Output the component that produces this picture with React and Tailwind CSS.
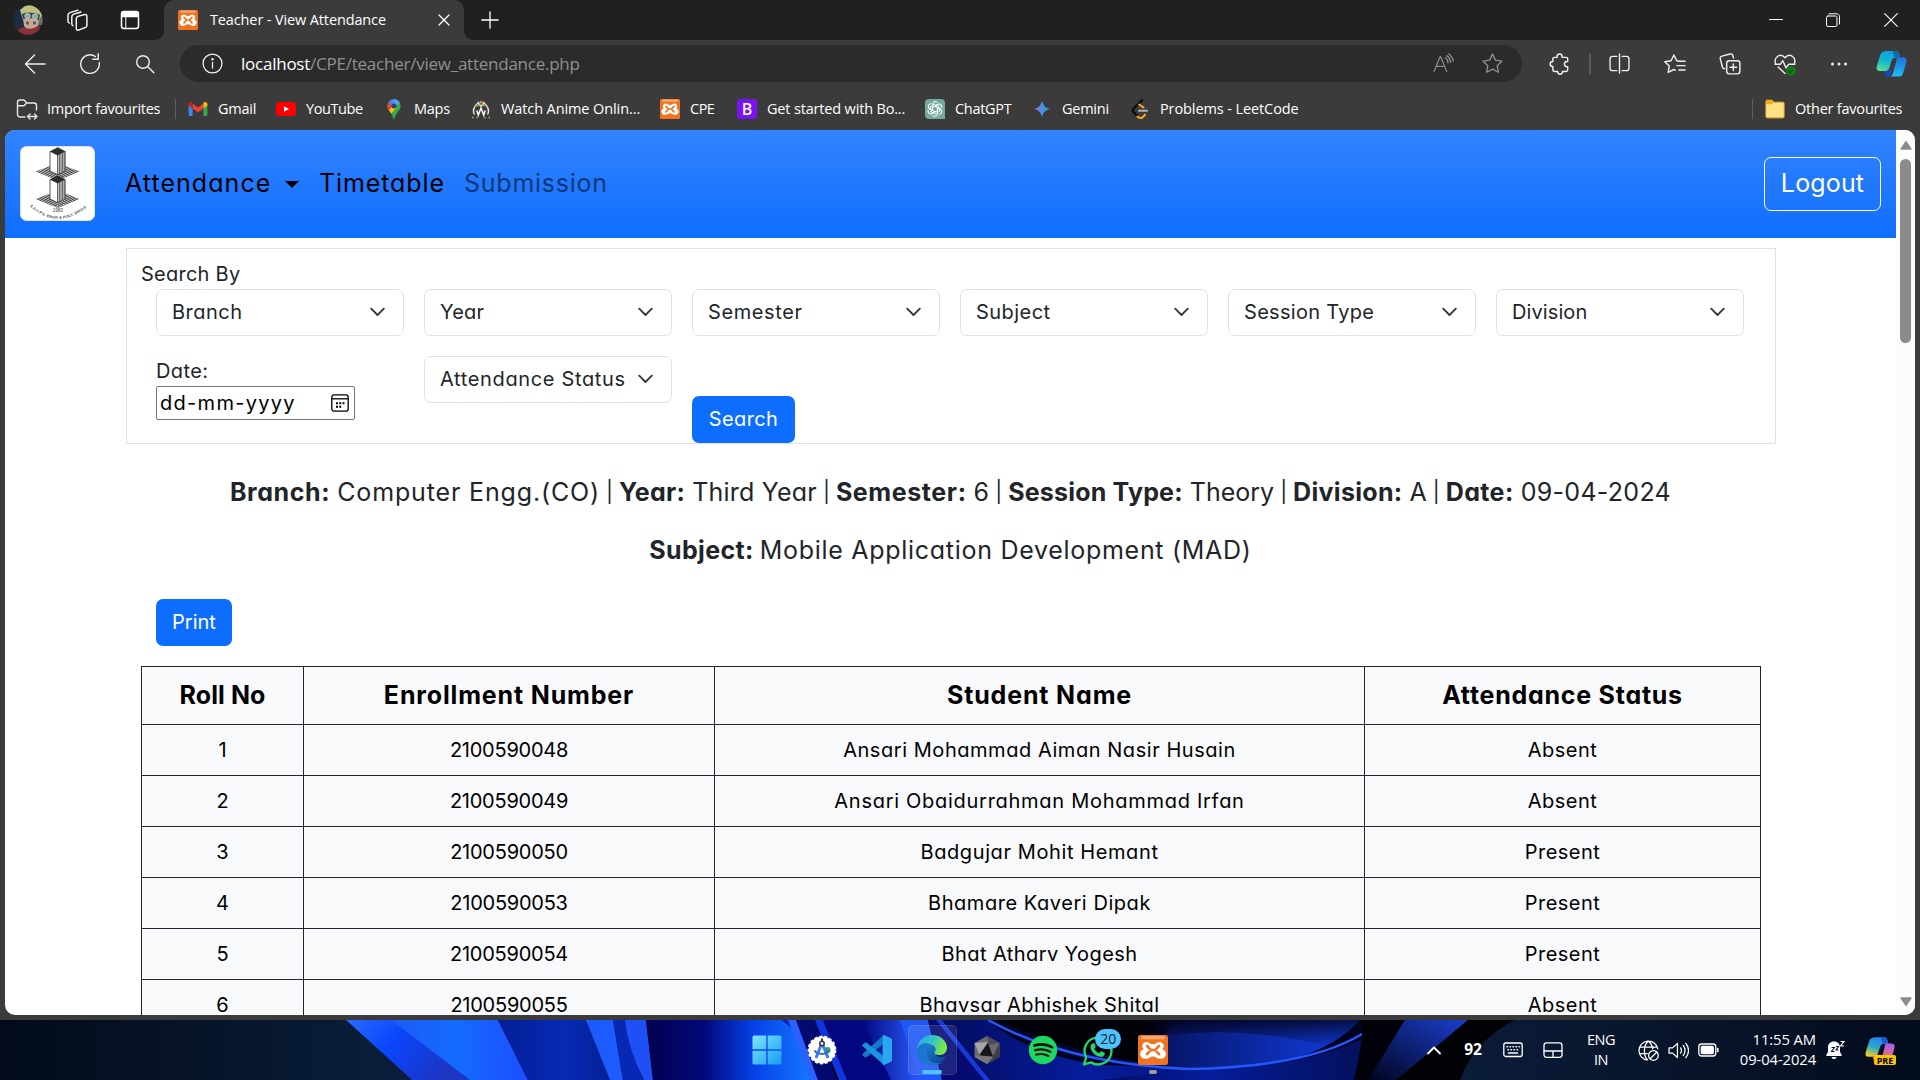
import React from "react";

const UI = "font-['Open_Sans','Noto_Sans',sans-serif]";
const PAGE = "font-['Inter','Roboto',sans-serif] [font-feature-settings:'cv11']";

/* ---------- shared icons ---------- */

const Svg = ({ className, box = "0 0 20 20", children, sw = 1.3 }) => (
  <svg className={className} viewBox={box} fill="none" stroke="currentColor" strokeWidth={sw} strokeLinecap="round" strokeLinejoin="round">
    {children}
  </svg>
);

const Xampp = ({ className }) => (
  <svg className={className} viewBox="0 0 20 20">
    <rect width="20" height="20" rx="1.5" fill="#f1731f" />
    <rect x="2" y="0.6" width="16" height="2.2" rx="1" fill="#f7a872" />
    <path d="M5.7 4.6c1.8 0 2.3 1.6 4.3 1.6s2.5-1.6 4.3-1.6a2.7 2.7 0 0 1 1.7 4.9 3.2 3.2 0 0 1-1.3 6.3c-2 0-2.7-1.5-4.7-1.5s-2.7 1.5-4.7 1.5A3.2 3.2 0 0 1 4 9.5a2.7 2.7 0 0 1 1.7-4.9z" fill="#fff" />
    <path d="M6 7.3 8.6 10 6 12.8M14 7.3 11.4 10l2.6 2.8M8.6 10h2.8" stroke="#f1731f" strokeWidth="1.7" fill="none" strokeLinecap="round" />
  </svg>
);

const Avatar = () => (
  <svg className="h-[30px] w-[30px]" viewBox="0 0 30 30">
    <defs>
      <clipPath id="av"><circle cx="15" cy="15" r="14.7" /></clipPath>
    </defs>
    <g clipPath="url(#av)">
      <rect width="30" height="30" fill="#1b2b44" />
      <path d="M14 0h16v20h-5z" fill="#66705f" />
      <path d="M9 12 7 5l5-4 6-1 7 3 4 7-3 5H10z" fill="#bfc27c" />
      <path d="M10 13h16l-1 8-5 5h-5l-4-5z" fill="#cfa48c" />
      <path d="M9 9c5-2 12-2 18 1l-1 5c-5-2-11-2-16-1z" fill="#33464f" />
      <circle cx="14.5" cy="11" r="2.700" fill="#8fa9ac" stroke="#c8d0d0" strokeWidth=".8" />
      <circle cx="22" cy="11.500" r="2.700" fill="#8fa9ac" stroke="#c8d0d0" strokeWidth=".8" />
      <ellipse cx="14.5" cy="18" rx="1.600" ry="1.700" fill="#2a6d86" />
      <ellipse cx="21.5" cy="18" rx="1.600" ry="1.700" fill="#2a6d86" />
      <path d="M4 28c1-5 6-7 9-5 4 2 9 0 13-3l3 10H5z" fill="#84323b" />
    </g>
  </svg>
);

const Copilot = ({ className, pre }) => (
  <svg className={className} viewBox="0 0 32 28">
    <defs>
      <linearGradient id={pre ? "ca" : "cb"} x1="0.6" y1="0" x2="0.2" y2="1">
        <stop offset="0" stopColor={pre ? "#2483e8" : "#0aa0e8"} />
        <stop offset=".5" stopColor={pre ? "#27a7cf" : "#12b7cf"} />
        <stop offset="1" stopColor={pre ? "#ffd21e" : "#5fdf8d"} />
      </linearGradient>
      <linearGradient id={pre ? "cc" : "cd"} x1="0.5" y1="0" x2="0.4" y2="1">
        <stop offset="0" stopColor={pre ? "#a65cf0" : "#1f6fe0"} />
        <stop offset="1" stopColor={pre ? "#ff7c53" : "#1fc0f5"} />
      </linearGradient>
    </defs>
    <path d="M11 1h9c3 0 3.500 1.600 4.300 4.500L25 8h-5c-2.500 0-3.300 1-4 3.500L13.500 19c-.7 2-1.800 2.800-4 2.800H4c-3 0-4-2-3.300-5L4.500 5C5.500 2.200 7.500 1 11 1z" fill={pre ? "url(#ca)" : "url(#cb)"} />
    <path d="M17 1h3c3 0 3.500 1.600 4.300 4.500L25 8h-4c-2 0-3-1.500-3.300-4z" fill={pre ? "#1f58d8" : "#0b6fa8"} />
    <path d="M22 7.500h6c3 0 4.200 2 3.400 5L28 24c-.8 2.600-2.400 3.600-5 3.600h-9c2.200-.4 3-1.600 3.700-4l3-11c.5-2 .4-3.500 1.300-5.100z" fill={pre ? "url(#cc)" : "url(#cd)"} />
    <path d="M8 21.800h3c2 0 3-1 3.500-3l1.300 4.400c-.5 2.500-1 4-3.300 4.300-2 0-3-1-3.500-2.800z" fill={pre ? "#e0589a" : "#1546cf"} />
  </svg>
);

/* ---------- browser chrome ---------- */

function TitleBar() {
  return (
    <div className="flex h-10 items-center bg-[#202020] text-white">
      <div className="flex h-full w-[164px] items-center pl-[13px]">
        <Avatar />
        <Svg className="ml-[23px] h-[22px] w-[22px]" box="0 0 22 22" sw={1.4}>
          <path d="M12.200 6.300 18.300 4.700a1.700 1.700 0 0 1 2.100 1.700v9.200c0 .9-.5 1.600-1.400 1.900l-7 2.800c-1.200.5-2.200-.3-2.200-1.500V9c0-1.300.8-2.300 2.400-2.700z" transform="translate(0.5 .8)" />
          <path d="M7 16.700c-.8-.2-1.200-.8-1.200-1.700V7.800c0-1.400.7-2.200 2-2.600L15 3" />
          <path d="M3.300 14c-.8-.2-1.300-.8-1.300-1.700V6.200C2 4.800 2.700 4 4 3.600L12 1.200" />
        </Svg>
        <Svg className="ml-8 h-5 w-5" sw={1.5}>
          <rect x="1.5" y="1.5" width="17" height="17" rx="2.5" />
          <path d="M2 2.500h16v4H2z" fill="currentColor" />
          <path d="M5.800 7v11" strokeWidth="1" />
        </Svg>
      </div>
      <div className="relative flex h-full w-[300px] items-center rounded-t-[10px] bg-[#3b3b3b] pr-3.5 pl-3.5">
        <svg className="absolute bottom-0 -left-2.5 h-2.5 w-2.5" viewBox="0 0 10 10"><path d="M10 0v10H0C6 10 10 6 10 0z" fill="#3b3b3b" /></svg>
        <svg className="absolute -right-2.5 bottom-0 h-2.5 w-2.5" viewBox="0 0 10 10"><path d="M0 0v10h10C4 10 0 6 0 0z" fill="#3b3b3b" /></svg>
        <Xampp className="h-5 w-5" />
        <span className="ml-3 text-[14.5px] tracking-[-0.13px] whitespace-nowrap">Teacher - View Attendance</span>
        <Svg className="ml-auto h-3 w-3" box="0 0 12 12" sw={1.3}><path d="M1 1l10 10M11 1 1 11" /></Svg>
      </div>
      <Svg className="ml-[17px] h-[18px] w-[18px]" box="0 0 18 18" sw={1.3}><path d="M9 .8v16.400M.8 9h16.400" /></Svg>
      <div className="ml-auto flex items-center pr-[22px]">
        <Svg className="mr-[43px] h-3.5 w-3.5" box="0 0 14 14" sw={1}><path d="M.5 6.500h13" /></Svg>
        <Svg className="mr-11 h-3.5 w-3.5" box="0 0 14 14" sw={1}><rect x=".5" y="3" width="10.5" height="10.5" rx="1.5" /><path d="M3 .8h7.500c1.800 0 3 1.200 3 3V11" /></Svg>
        <Svg className="h-3.5 w-3.5" box="0 0 14 14" sw={1.1}><path d="m.7.7 12.600 12.600M13.300.7.7 13.300" /></Svg>
      </div>
    </div>
  );
}

const STAR = "M10 1.800l2.500 5.300 5.800.8-4.200 4 1 5.700L10 14.900l-5.100 2.700 1-5.700-4.200-4 5.800-.8z";

function AddressRow() {
  return (
    <div className="flex h-[47px] items-center text-[#efefef]">
      <Svg className="ml-6 h-[22px] w-[22px]" box="0 0 22 22" sw={1.4}><path d="M21 11H1.500M10.500 2 1.500 11l9 9" /></Svg>
      <Svg className="ml-[33px] h-[22px] w-[22px]" box="0 0 22 22" sw={1.4}><path d="M20.200 9.500a9.300 9.300 0 1 1-3.800-6M19.200.8v5.400h-5.400" /></Svg>
      <Svg className="ml-[34px] h-5 w-5" sw={1.4}><circle cx="8" cy="8" r="6.3" /><path d="m12.800 12.800 6 6" /></Svg>
      <div className="ml-[25px] flex h-[37px] w-[1342px] items-center rounded-full bg-[#2b2b2b]">
        <Svg className="ml-[22px] h-[21px] w-[21px]" sw={1.2}><circle cx="10" cy="10" r="9" /><path d="M10 9v5.500" /><circle cx="10" cy="6" r=".6" fill="currentColor" /></Svg>
        <span className="ml-[18px] text-[17px] tracking-[-0.24px] whitespace-nowrap text-[#909090]"><span className="text-white">localhost</span>/CPE/teacher/view_attendance.php</span>
        <div className="ml-auto flex items-center text-[#8e8e8e]">
          <Svg className="h-[21px] w-[21px]" sw={1.2}><path d="m1 17.500 5.700-14h.6l5.700 14M3 12.700h8M11.800 4.500a6 6 0 0 1 2.400 5M13.200 2.500a9 9 0 0 1 3.600 6.500M14.800.8a11 11 0 0 1 4.500 7" /></Svg>
          <Svg className="mr-[18px] ml-[27px] h-[23px] w-[23px]" sw={1.2}><path d={STAR} /></Svg>
        </div>
      </div>
      <Svg className="ml-[27px] h-[22px] w-[22px]" sw={1.3}><path d="M7.300 3.200a2.300 2.300 0 0 1 4.600 0V4h3.600c.9 0 1.500.6 1.500 1.500v2.200h-.6a2.400 2.400 0 0 0 0 4.800h.6v2.800c0 .9-.6 1.500-1.500 1.500h-3.200v.3a2.200 2.200 0 0 1-4.400 0v-.3H5c-.9 0-1.500-.6-1.500-1.500v-3h-.2a2.200 2.200 0 0 1 0-4.500h.2V5.500C3.500 4.600 4.100 4 5 4h2.300z" /></Svg>
      <div className="ml-[18px] h-5 w-0.5 bg-[#5c5c5c]" />
      <Svg className="ml-[18px] h-[21px] w-[21px]" sw={1.3}><path d="M10 .8v18.400M7.500 3.200H3.300C2 3.200 1 4.200 1 5.500v9c0 1.300 1 2.300 2.300 2.300h4.200M12.500 3.200h4.200c1.300 0 2.300 1 2.300 2.300v9c0 1.300-1 2.300-2.300 2.300h-4.200" /></Svg>
      <Svg className="ml-[34px] h-[22px] w-[22px]" sw={1.3}><path d="M13 7.200 11.600 7 9 1.800 6.400 7l-5.700.9 4.100 4-1 5.700L9 15l1.200.6M13 7.500h6.200M11.800 11.500h7.400M13.500 15.500h5.700" /></Svg>
      <Svg className="ml-[33px] h-[22px] w-[22px]" sw={1.3}><rect x="7" y="7" width="12" height="12" rx="2.3" /><path d="M13 10v6M10 13h6M5.200 14.300c-1 0-1.800-.6-2.100-1.600L1.200 5.400c-.3-1.200.3-2.300 1.500-2.600L10 .9c1.200-.3 2.300.3 2.600 1.500l.5 2" /></Svg>
      <div className="relative ml-[33px] h-[22px] w-[22px]">
        <Svg className="h-[22px] w-[22px]" sw={1.3}><path d="M1.300 9C-.2 4.500 5.500-1 10 4.300 14.500-1 20.200 4.500 18.700 9M1 10.300h4.700L8 7l3 6.500 2.300-3.200H19M3.800 12.700 10 18.700" /></Svg>
        <svg className="absolute right-0 -bottom-px h-2.5 w-2.5" viewBox="0 0 11 11"><circle cx="5.5" cy="5.5" r="5.5" fill="#117a12" /><path d="m3 5.700 1.800 1.700L8 4" stroke="#052e06" fill="none" /></svg>
      </div>
      <svg className="ml-[34px] h-[18px] w-[18px]" viewBox="0 0 18 18" fill="currentColor"><circle cx="2.500" cy="9" r="1.500" /><circle cx="9" cy="9" r="1.500" /><circle cx="15.500" cy="9" r="1.500" /></svg>
      <Copilot className="ml-7 h-[27px] w-[31px]" />
    </div>
  );
}

const Gmail = (
  <svg className="h-5 w-5" viewBox="0 0 20 20">
    <path d="M.6 6v9.500c0 .8.6 1.400 1.400 1.400h2.600V9z" fill="#4285f4" />
    <path d="M19.400 6v9.500c0 .8-.6 1.400-1.400 1.400h-2.600V9z" fill="#34a853" />
    <path d="M4.600 4.500 10 8.600l5.400-4.100v4.900L10 13.500 4.600 9.400z" fill="#ea4335" />
    <path d="M.6 5.300c0-2 2.200-2.800 3.600-1.800l.4.300v5.600L.6 6.500z" fill="#c5221f" />
    <path d="M19.400 5.300c0-2-2.200-2.800-3.600-1.800l-.4.300v5.600l4-2.900z" fill="#fbbc04" />
  </svg>
);
const YouTube = (
  <svg className="h-5 w-5" viewBox="0 0 20 20"><rect y="3" width="20" height="14" rx="3.5" fill="#f00" /><path d="m8 7.200 5 2.800-5 2.800z" fill="#fff" /></svg>
);
const Maps = (
  <svg className="h-5 w-5" viewBox="0 0 20 20">
    <defs><clipPath id="pin"><path d="M10 .3a6.700 6.700 0 0 1 6.700 6.700c0 4.500-4.700 6-5.800 12-.2 1.200-1.600 1.200-1.800 0C8 13 3.300 11.500 3.300 7A6.700 6.700 0 0 1 10 .3z" /></clipPath></defs>
    <g clipPath="url(#pin)">
      <rect width="20" height="20" fill="#34a853" />
      <path d="M0 0h20L8 8z" fill="#4285f4" />
      <path d="m0 0 9 7-8 8z" fill="#ea4335" />
      <path d="m2 14 8-8 3 2-7 8z" fill="#fbbc04" />
      <path d="M9 0h11L11 8z" fill="#5b9bf8" />
    </g>
    <circle cx="10" cy="7" r="2.5" fill="#24476f" />
  </svg>
);
const Anime = (
  <svg className="h-5 w-5" viewBox="0 0 20 20" fill="none">
    <path d="M3.500 15.500C1 11 4 6.500 7.500 3.500l2.200 4" stroke="#e9e3d8" strokeWidth="1.500" />
    <path d="M16.500 15.500C19 11 16 6.500 12.500 3.500l-2.200 4" stroke="#e9e3d8" strokeWidth="1.500" />
    <path d="M6.500 7.500 10 2.500l3.500 5" stroke="#c8a765" strokeWidth="1.300" />
    <path d="M5.800 11.500 7.300 16 10 9l2.700 7 1.500-4.500" stroke="#fff" strokeWidth="1.500" />
    <path d="M1 18.500h1.500M5.500 18.500H7M13 18.500h1.500M17.500 18.500H19" stroke="#c8a765" strokeWidth="1.500" />
  </svg>
);
const Boots = (
  <span className="flex h-5 w-5 items-center justify-center rounded-[3px] bg-[#7a12f5] text-[16px] leading-none font-semibold text-white">B</span>
);
const Gpt = (
  <svg className="h-5 w-5" viewBox="0 0 20 20" fill="none">
    <path d="M4 0h12a4 4 0 0 1 4 4v16H4a4 4 0 0 1-4-4V4a4 4 0 0 1 4-4z" fill="#74aa9c" />
    {[0, 60, 120, 180, 240, 300].map((a) => (
      <path key={a} transform={`rotate(${a} 10 10)`} d="M7.300 8.600V5.300A3 3 0 0 1 12.600 3.600M7.300 8.600 11.800 6l2.900 1.600" stroke="#fff" strokeWidth="1" />
    ))}
  </svg>
);
const Gemini = (
  <svg className="h-5 w-5" viewBox="0 0 20 20">
    <defs><linearGradient id="gm" x1="0" x2="1"><stop offset=".1" stopColor="#a36fc0" /><stop offset=".5" stopColor="#4a8fe0" /><stop offset="1" stopColor="#1aa5e8" /></linearGradient></defs>
    <path d="M10 1.300c.8 5 3.500 8 8.300 8.700-4.800.7-7.500 3.700-8.300 8.700C9.200 13.700 6.500 10.700 1.700 10 6.500 9.300 9.200 6.300 10 1.300z" fill="url(#gm)" />
  </svg>
);
const Leet = (
  <svg className="h-5 w-5" viewBox="0 0 20 20" fill="none" strokeLinecap="round">
    <path d="M12 1.200 3.800 9.300c-1.300 1.300-1.300 2.800 0 4.100l4 4" stroke="#0a0a0a" strokeWidth="2.3" />
    <path d="m9.200 5.500 4.300 3M7.500 17.500c1.800 2 4.200 1.800 5.700.2l1.800-2" stroke="#ffa116" strokeWidth="2.1" />
    <path d="M9 11.700h8" stroke="#b3b3b3" strokeWidth="2.1" />
  </svg>
);

const Mark = ({ icon, label, w }) => (
  <div className={`flex shrink-0 items-center gap-2.5 ${w}`}>
    {icon}
    <span>{label}</span>
  </div>
);

function Bookmarks() {
  return (
    <div className="flex h-[43px] items-center text-[14.5px] tracking-[-0.25px] whitespace-nowrap text-white">
      <Svg className="ml-4 h-[22px] w-[22px] text-[#e8e8e8]" box="0 0 22 22" sw={1.4}>
        <path d="M9 19H4a2.500 2.500 0 0 1-2.500-2.500v-12A2.500 2.500 0 0 1 4 2h4l2.800 3H18a2.500 2.500 0 0 1 2.500 2.500V12M1.500 7.800H8l2.800-2.800M11.500 18.500H21M14 16l-2.500 2.500L14 21M18.500 16l2.500 2.500-2.500 2.500" />
      </Svg>
      <span className="ml-[9px] w-[114px] tracking-[-0.25px]">Import favourites</span>
      <div className="mr-3 ml-[14px] h-5 w-px bg-[#606060]" />
      <Mark icon={Gmail} label="Gmail" w="w-[88px]" />
      <Mark icon={YouTube} label="YouTube" w="w-[108px] tracking-[-0.4px]" />
      <Mark icon={Maps} label="Maps" w="w-[87px]" />
      <Mark icon={Anime} label="Watch Anime Onlin..." w="w-[189px] tracking-[-0.1px]" />
      <Mark icon={<Xampp className="h-5 w-5" />} label="CPE" w="w-[77px] tracking-[-0.5px]" />
      <Mark icon={Boots} label="Get started with Bo..." w="w-[188px] tracking-[-0.17px]" />
      <Mark icon={Gpt} label="ChatGPT" w="w-[107px] tracking-[-0.3px]" />
      <Mark icon={Gemini} label="Gemini" w="w-[98px]" />
      <Mark icon={Leet} label="Problems - LeetCode" w="w-[170px] tracking-[-0.1px]" />
      <div className="ml-auto h-5 w-px bg-[#606060]" />
      <svg className="ml-3 h-5 w-5" viewBox="0 0 20 20">
        <path d="M.7 2.500C.7 1.600 1.300 1 2.200 1h4.300c.8 0 1.300.3 1.700 1l.5 1H17.800c.9 0 1.500.6 1.500 1.500v13c0 .9-.6 1.500-1.500 1.500H2.200c-.9 0-1.500-.6-1.500-1.500z" fill="#ffe082" stroke="#b58a1b" />
        <path d="M1.200 2.500c0-.6.4-1 1-1h4.600c.8 0 1.200.8 1.200 1.500S7.500 5.300 6.800 5.300H1.200z" fill="#e8b012" />
      </svg>
      <span className="mr-[18px] ml-2.5 w-[107px] tracking-[-0.22px]">Other favourites</span>
    </div>
  );
}

/* ---------- page ---------- */

function CollegeLogo() {
  return (
    <svg className="-mt-0.5 h-[75px] w-[75px]" viewBox="0 0 75 75">
      <defs>
        <pattern id="hl" width="1.6" height="1.6" patternUnits="userSpaceOnUse" patternTransform="rotate(-24)"><rect width="1.6" height="1.6" fill="#fff" /><rect width="1.6" height="1" fill="#333" /></pattern>
        <pattern id="hr" width="1.6" height="1.6" patternUnits="userSpaceOnUse" patternTransform="rotate(24)"><rect width="1.6" height="1.6" fill="#fff" /><rect width="1.6" height="1" fill="#333" /></pattern>
        <path id="arc" d="M9 59.500 Q37.500 86 69 59.500" />
      </defs>
      <rect x=".5" y=".5" width="74" height="74" rx="6" fill="#fff" stroke="#dbe3ee" />
      {[0, 27.5].map((y) => (
        <g key={y} transform={`translate(0 ${y})`}>
          <path d="M15.700 25.500 37.700 17v17.500z" fill="url(#hr)" />
          <path d="M59.500 25.500 37.700 17v17.500z" fill="url(#hl)" />
        </g>
      ))}
      {[0, 28].map((y) => (
        <g key={y} transform={`translate(0 ${y})`}>
          <path d="M30 5.300v19.700l7.700 3.700V9z" fill="#fff" stroke="#333" strokeWidth=".8" />
          <path d="M45.300 5.300v19.700l-7.600 3.700V9z" fill="#fff" stroke="#333" strokeWidth=".7" />
          <path d="M39.300 8.500v19.500M41 7.700v19.500M42.700 7v19.200M44.200 6v19.500" stroke="#333" strokeWidth=".9" />
          <path d="m37.700 1.300 7.600 4-7.600 3.900L30 5.300z" fill="#2e2e2e" />
        </g>
      ))}
      <text x="37.7" y="65.5" textAnchor="middle" className="font-['Liberation_Sans'] text-[4.5px]" fill="#333">1983</text>
      <text className="font-['Liberation_Sans'] text-[3.7px] font-bold" fill="#444" letterSpacing=".2"><textPath href="#arc" startOffset="1">S.S.V.P.S. ENGG &amp; POLY. DHULE</textPath></text>
    </svg>
  );
}

function NavBar() {
  return (
    <nav className="flex h-[108px] items-center bg-linear-to-b from-[#3183ff] to-[#0d6efd] px-[15px] text-[25px]">
      <CollegeLogo />
      <a className="ml-[30px] w-[160px] tracking-[1.05px] text-black">Attendance</a>
      <svg className="h-[7px] w-[14px]" viewBox="0 0 14 7"><path d="M0 0h14L7 7z" fill="#000" /></svg>
      <a className="ml-5 w-[145px] tracking-[0.9px] text-black">Timetable</a>
      <a className="tracking-[0.75px] text-[#0b3876]">Submission</a>
      <a className="ml-auto flex h-[54px] w-[117px] items-center justify-center rounded-[7px] border border-white tracking-[0.15px] text-white">Logout</a>
    </nav>
  );
}

const Select = ({ label, t, className = "" }) => (
  <div className={`flex h-[47px] w-[248px] items-center justify-between rounded-[7px] border border-[#dee2e6] bg-white pr-[18px] pb-px pl-[15px] whitespace-nowrap ${className}`}>
    <span className={t}>{label}</span>
    <svg className="h-2.5 w-[15px]" viewBox="0 0 15 10"><path d="m1.200 1.700 6.300 6.300 6.300-6.300" fill="none" stroke="#343a40" strokeWidth="1.9" strokeLinecap="round" strokeLinejoin="round" /></svg>
  </div>
);

function SearchPanel() {
  return (
    <section className="mr-[120px] ml-[121px] mt-2.5 h-[196px] border border-[#dee2e6] text-[20px] text-[#212529]">
      <div className="flex h-10 items-center pt-[9px] pl-3.5 tracking-[0.25px]">Search By</div>
      <div className="flex gap-5 pl-[29px]">
        <Select label="Branch" t="tracking-[0.5px]" />
        <Select label="Year" t="tracking-[0.2px]" />
        <Select label="Semester" t="tracking-[0.6px]" />
        <Select label="Subject" t="tracking-[0.45px]" />
        <Select label="Session Type" t="tracking-[0.3px]" />
        <Select label="Division" t="tracking-[0.1px]" />
      </div>
      <div className="mt-5 flex gap-5 pl-[29px]">
        <div className="w-[248px]">
          <div className="h-[30px] leading-[30px] tracking-[0.4px]">Date:</div>
          <div className="flex h-[34px] w-[199px] items-center justify-between rounded-[2px] border border-[#767676] pr-[5px] pl-[3px] text-black">
            <span className="tracking-[1.3px]">dd-mm-yyyy</span>
            <svg className="h-[18px] w-[18px]" viewBox="0 0 18 18" fill="none" stroke="#000" strokeWidth="1.3">
              <rect x=".8" y=".8" width="16.4" height="16.4" rx="2.5" />
              <path d="M1 4.800h16" />
              <path d="M5 9.200h2M8.200 9.200h2M11.500 9.200h2M5 12.700h2M8.200 12.700h2" strokeWidth="2" />
            </svg>
          </div>
        </div>
        <Select label="Attendance Status" t="tracking-[0.65px]" />
        <button className="mt-10 flex h-[47px] w-[103px] items-center justify-center rounded-[7px] bg-[#0d6efd] pb-0.5 tracking-[0.4px] text-white">Search</button>
      </div>
    </section>
  );
}

const B = ({ className = "", children }) => <b className={`font-bold ${className}`}>{children}</b>;
const Bar = () => <span className="flex w-[5px] justify-center"><span className="-mt-0.5 text-[21px]">|</span></span>;

function Summary() {
  return (
    <div className="text-[25px] whitespace-nowrap text-[#212529]">
      <p className="mt-[30px] flex h-[38px] items-center justify-center gap-[7px]">
        <B className="tracking-[0.6px]">Branch:</B>
        <span className="tracking-[0.85px]">Computer Engg.(CO)</span>
        <Bar />
        <B className="tracking-[0.3px]">Year:</B>
        <span className="tracking-[0.2px]">Third Year</span>
        <Bar />
        <B className="tracking-[0.6px]">Semester:</B>
        <span>6</span>
        <Bar />
        <B className="tracking-[0.2px]">Session Type:</B>
        <span>Theory</span>
        <Bar />
        <B className="tracking-[0.3px]">Division:</B>
        <span>A</span>
        <Bar />
        <B className="tracking-[0.4px]">Date:</B>
        <span className="tracking-[0.3px]">09-04-2024</span>
      </p>
      <p className="mt-5 flex h-[38px] items-center justify-center gap-1.5">
        <B className="tracking-[0.35px]">Subject:</B>
        <span className="tracking-[0.71px]">Mobile Application Development (MAD)</span>
      </p>
    </div>
  );
}

const rows = [
  ["1", "2100590048", "Ansari Mohammad Aiman Nasir Husain", "Absent", "tracking-[0.55px]"],
  ["2", "2100590049", "Ansari Obaidurrahman Mohammad Irfan", "Absent", "tracking-[0.72px]"],
  ["3", "2100590050", "Badgujar Mohit Hemant", "Present", "tracking-[0.6px]"],
  ["4", "2100590053", "Bhamare Kaveri Dipak", "Present", "tracking-[0.55px]"],
  ["5", "2100590054", "Bhat Atharv Yogesh", "Present", "tracking-[0.42px]"],
  ["6", "2100590055", "Bhavsar Abhishek Shital", "Absent", "tracking-[0.4px]"],
];

function AttendanceTable() {
  return (
    <table className="mt-5 ml-[136px] w-[1620px] table-fixed border-collapse bg-[#f8f9fb] text-center text-[20px] text-black">
      <thead>
        <tr className="h-[58px] text-[25px]">
          <th className="w-[162px] border border-[#212529] tracking-[0.1px]">Roll No</th>
          <th className="w-[411px] border border-[#212529] tracking-[0.85px]">Enrollment Number</th>
          <th className="w-[650px] border border-[#212529] tracking-[0.85px]">Student Name</th>
          <th className="border border-[#212529] tracking-[0.75px]">Attendance Status</th>
        </tr>
      </thead>
      <tbody>
        {rows.map(([no, enr, name, status, t]) => (
          <tr key={no} className="h-[51px]">
            <td className="border border-[#212529]">{no}</td>
            <td className="border border-[#212529] tracking-[-0.25px]">{enr}</td>
            <td className={`border border-[#212529] ${t}`}>{name}</td>
            <td className="border border-[#212529] tracking-[0.45px]">{status}</td>
          </tr>
        ))}
      </tbody>
    </table>
  );
}

function PageScrollbar() {
  return (
    <div className="flex w-[19px] shrink-0 flex-col items-center bg-[#fcfcfc] pt-2.5 pb-2">
      <svg className="h-2.5 w-3" viewBox="0 0 12 10"><path d="M6 0.500 11.500 8.500c.3.600 0 1.200-.6 1.200H1.100c-.6 0-.9-.6-.6-1.200z" fill="#8b8b8b" /></svg>
      <div className="mt-[9px] h-[184px] w-[11px] rounded-full bg-[#8b8b8b]" />
      <svg className="mt-auto h-2.5 w-3" viewBox="0 0 12 10"><path d="M6 9.500 11.500 1.500c.3-.6 0-1.200-.6-1.200H1.100c-.6 0-.9.6-.6 1.200z" fill="#8b8b8b" /></svg>
    </div>
  );
}

/* ---------- taskbar ---------- */

const Wallpaper = () => (
  <svg className="absolute inset-0 h-full w-full" viewBox="0 0 1920 60" preserveAspectRatio="none">
    <defs>
      <linearGradient id="w0" x1="0" x2="1"><stop offset="0" stopColor="#030b19" /><stop offset="1" stopColor="#0a1e3c" /></linearGradient>
      <linearGradient id="w1" x1="0" x2="1" y2=".4"><stop offset="0" stopColor="#2a6cff" /><stop offset=".45" stopColor="#0a45fb" /><stop offset="1" stopColor="#1d35c0" /></linearGradient>
      <linearGradient id="w2" x1="0" x2="1"><stop offset="0" stopColor="#1c5cf5" /><stop offset=".5" stopColor="#146bff" /><stop offset="1" stopColor="#1d4dff" /></linearGradient>
      <linearGradient id="w3" x1="0" x2="1"><stop offset="0" stopColor="#051f95" /><stop offset=".6" stopColor="#052ab5" /><stop offset="1" stopColor="#041f90" /></linearGradient>
      <linearGradient id="w4" x1="0" x2="1"><stop offset="0" stopColor="#020050" /><stop offset=".35" stopColor="#030878" /><stop offset=".65" stopColor="#0640e8" /><stop offset="1" stopColor="#1478ff" /></linearGradient>
      <linearGradient id="w5" x1="0" x2="1"><stop offset="0" stopColor="#030880" /><stop offset="1" stopColor="#2a5cff" /></linearGradient>
      <linearGradient id="w6" x1="0" x2="1"><stop offset="0" stopColor="#020318" /><stop offset=".35" stopColor="#040a48" /><stop offset="1" stopColor="#1140e8" /></linearGradient>
      <linearGradient id="w7" x1="0" x2="1"><stop offset="0" stopColor="#030c60" /><stop offset=".4" stopColor="#061c9c" /><stop offset="1" stopColor="#04105c" /></linearGradient>
      <linearGradient id="w8" x1="0" x2="1" y1="1" y2="0"><stop offset="0" stopColor="#02041c" /><stop offset="1" stopColor="#1a3fd0" /></linearGradient>
      <linearGradient id="w9" x1="0" x2="1"><stop offset="0" stopColor="#0b1c38" /><stop offset="1" stopColor="#030c1c" /></linearGradient>
      <linearGradient id="wb" x1="0" x2="0" y2="1"><stop offset="0" stopColor="#01031c" stopOpacity=".8" /><stop offset="1" stopColor="#01031c" stopOpacity="0" /></linearGradient>
      <linearGradient id="wc" x1="0" x2="1"><stop offset="0" stopColor="#010108" /><stop offset=".75" stopColor="#010108" /><stop offset="1" stopColor="#010108" stopOpacity="0" /></linearGradient>
    </defs>
    <rect width="1920" height="60" fill="#020220" />
    <path d="M0 0h346l66 60H0z" fill="url(#w0)" />
    <path d="M346 0h46l80 60h-60z" fill="url(#w1)" />
    <path d="M391 0h107l30 60h-58z" fill="url(#w2)" />
    <path d="M498 0h90l24 60h-84z" fill="url(#w3)" />
    <path d="M586 0h27l10 60h-13z" fill="#1c5cff" />
    <path d="M613 0h13q4 35 18 60h-21z" fill="#0727b5" />
    <path d="M625 0h21l7 60h-9q-16-30-19-60z" fill="#1e50f5" />
    <path d="M646 0h136q30 22 29 60H653z" fill="url(#w4)" />
    <path d="M782 0h20l22 60h-13q0-38-29-60z" fill="#0a20c8" />
    <path d="m788 0 8 0 22 60h-8z" fill="#2a62ff" />
    <path d="M796 0h22l18 60h-18z" fill="#020a70" />
    <path d="M815 0h8l24 60h-8z" fill="#1135dd" />
    <path d="M823 0h78l20 60h-74z" fill="#030880" />
    <path d="M862 0h39l20 60h-30z" fill="url(#w5)" />
    <path d="M900 0h28l14 60h-22z" fill="#1f58f5" />
    <path d="M928 0h10l52 60h-48z" fill="#050b70" />
    <path d="M936 0h6l48 60h-6z" fill="#1838d8" />
    <path d="M942 0h46q40 35 112 45l200 5v10H990z" fill="url(#w7)" />
    <path d="M988 0h372q-40 45-140 50-160 0-232-50z" fill="url(#w6)" />
    <path d="M1130 0h232q-4 12-30 28-100-28-202-6z" fill="url(#wb)" />
    <path d="M1000 0h190q-50 16-20 46-90-8-170-46z" fill="url(#wc)" />
    <path d="M1180 51q120-2 182-32l-8 41h-254z" fill="url(#w7)" />
    <path d="M988 0q80 44 200 49 120-2 174-35" fill="none" stroke="#2458ff" strokeWidth="2.5" />
    <path d="M1362 0h110l-72 60h-46q10-30 8-60z" fill="#01010a" />
    <path d="M1405 0h63l-70 60h-30z" fill="url(#w8)" />
    <path d="M1468 0h50q-40 20-58 60h-64z" fill="#010206" />
    <path d="M1515 0h405v60h-460q15-40 55-60z" fill="url(#w9)" />
  </svg>
);

const Task = ({ active, dot, children }) => (
  <div className="relative flex h-[50px] w-[55.2px] items-center justify-center">
    {active && <div className="absolute inset-x-[3px] inset-y-0 rounded-[5px] border border-white/10 bg-white/10" />}
    <div className="relative flex">{children}</div>
    {active && <div className="absolute bottom-px h-1 w-5 rounded-full bg-[#4cc2ff]" />}
    {dot && <div className="absolute bottom-px h-1 w-2 rounded-full bg-[#9a9aa5]" />}
  </div>
);

function TaskIcons() {
  return (
    <div className="relative ml-[739px] flex h-full w-[443px] shrink-0 items-center">
      <Task>
        <svg className="h-[30px] w-[30px]" viewBox="0 0 30 30">
          <defs><linearGradient id="wi" x2="1" y2="1"><stop offset="0" stopColor="#7fe6ff" /><stop offset="1" stopColor="#129cf2" /></linearGradient></defs>
          <path d="M2 .5h12.300v13.800H.5V2A1.500 1.500 0 0 1 2 .5zM15.700.5H28A1.500 1.500 0 0 1 29.500 2v12.300H15.700zM.5 15.700h13.800v13.800H2A1.500 1.500 0 0 1 .5 28zM15.700 15.700h13.800V28a1.500 1.500 0 0 1-1.500 1.500H15.700z" fill="url(#wi)" />
        </svg>
      </Task>
      <Task>
        <svg className="h-[30px] w-[30px]" viewBox="0 0 30 30" fill="none">
          <circle cx="15" cy="15" r="13.4" fill="#fff" stroke="#fff" strokeWidth="2" strokeDasharray="3 2" />
          <circle cx="20.5" cy="15" r="3" fill="#2fa84f" />
          <path d="m14.500 9-5.500 14M15.500 9 21 23" stroke="#3f7de8" strokeWidth="3" />
          <path d="M7.500 15.500c3 4.500 12 4.500 15 0" stroke="#3166cf" strokeWidth="2" />
          <circle cx="15" cy="8.500" r="2.200" fill="#fff" stroke="#30343a" strokeWidth="1.5" />
          <path d="M15 3.500v3" stroke="#30343a" strokeWidth="2" />
        </svg>
      </Task>
      <Task>
        <svg className="h-[30px] w-[30px]" viewBox="0 0 30 30">
          <path d="M22 0 1 18.500c-.9.8-.9 1.500 0 2.300l1.500 1.300c.7.600 1.400.6 2 .1L24 7z" fill="#1479c4" />
          <path d="M22 30 1 11.500c-.9-.8-.9-1.500 0-2.300l1.500-1.300c.7-.6 1.400-.6 2-.1L24 23z" fill="#1b93df" />
          <path d="m22 0 7 3.300c.7.400 1 .9 1 1.700v20c0 .8-.3 1.300-1 1.700L22 30c-.9 0-1.300-.4-1.300-1.500v-27C20.700.5 21 0 22 0z" fill="#2aa7f0" />
        </svg>
      </Task>
      <Task active>
        <svg className="h-[30px] w-[30px]" viewBox="0 0 30 30">
          <defs>
            <linearGradient id="e1" x2="1" y2=".3"><stop offset="0" stopColor="#2ba8e8" /><stop offset=".55" stopColor="#35c1c8" /><stop offset="1" stopColor="#7be84a" /></linearGradient>
            <linearGradient id="e2" x2=".6" y2="1"><stop offset="0" stopColor="#1b7fd0" /><stop offset="1" stopColor="#0c4a98" /></linearGradient>
          </defs>
          <path d="M0 14C1 5 8 0 15 0c9 0 15 6.500 15 12.500 0 5-3.500 7.500-7.500 7.500-4.500 0-5.500-1.800-4.700-3 1.200-1.800 1-3.500-.3-5C12 6 3 8 0 14z" fill="url(#e1)" />
          <path d="M0 14c2.500-5.500 9-7 13-4.500-6 2-7 13 1.500 17.500 4 2 8.500 1.500 12.500-1C23.500 29 19.500 30 15 30 6 30-.5 23 0 14z" fill="#1878cc" />
          <path d="M9.500 17c-.3-4 2-7.500 5.500-7 2 .5 3 2 3 3.500-2 3.500-.7 7 4 8.500 2.500.6 5 .2 6.500-.6.7-.3 1 .2.700.7-3 5-8.700 7.200-13.700 5.200C11.500 25.700 9.700 21 9.500 17z" fill="url(#e2)" />
        </svg>
      </Task>
      <Task>
        <svg className="h-[30px] w-[30px]" viewBox="0 0 30 30">
          <path d="m15 1 12.500 7v14L15 29 2.500 22V8z" fill="#6b6b6f" />
          <path d="m15 1 12.500 7L17 10z" fill="#4d4d52" />
          <path d="m2.500 8 13-1-8 13z" fill="#a5a5aa" />
          <path d="m15 29 12.500-7V8l-7 14z" fill="#3e3e42" />
          <path d="M16 8 7 20.500l14 1z" fill="#17171a" />
          <path d="m2.500 22 4.500-1.500L21 22l-6 7z" fill="#77777c" />
        </svg>
      </Task>
      <Task>
        <svg className="h-[30px] w-[30px]" viewBox="0 0 30 30" fill="none" strokeLinecap="round" stroke="#08130c">
          <circle cx="15" cy="15" r="14.2" fill="#1ed760" stroke="none" />
          <path d="M6.500 10.500c6-1.700 12.500-1.200 17.500 1.700" strokeWidth="2.7" />
          <path d="M7.300 15.200c5.200-1.500 10.500-1 15 1.600" strokeWidth="2.3" />
          <path d="M8 19.700c4.500-1.200 8.800-.8 12.500 1.400" strokeWidth="1.9" />
        </svg>
      </Task>
      <Task>
        <svg className="h-[31px] w-[31px]" viewBox="0 0 30 30">
          <path d="M2 28.500 4 21.500A13 13 0 1 1 8.700 26.500z" fill="none" stroke="#25d366" strokeWidth="2.3" strokeLinejoin="round" />
          <path d="M10.500 8c.8-.4 1.500-.2 1.800.6l.9 2.200c.2.500.1.900-.3 1.400l-.9 1c1 2 2.500 3.400 4.700 4.400l1.200-1.400c.4-.4.800-.5 1.300-.3l2.300 1.100c.7.400.8.900.5 1.700-.7 1.900-2.700 2.800-4.600 2.400-5-1.200-8.500-4.700-9.200-9C8 10.200 9 8.600 10.500 8z" fill="#25d366" />
        </svg>
        <span className="absolute -top-1.5 left-[13px] flex h-5 w-[26px] items-center justify-center rounded-full bg-[#4cc2ff] text-[14px] leading-none text-[#10222c]">20</span>
      </Task>
      <Task dot>
        <Xampp className="h-[30px] w-[30px]" />
      </Task>
    </div>
  );
}

function Tray() {
  return (
    <div className="relative flex h-full w-[494px] items-center text-[15px] text-white">
      <Svg className="h-3 w-4 shrink-0" box="0 0 16 12" sw={1.8}><path d="M2 9.500 8 3.500l6 6" /></Svg>
      <span className="ml-[21px] w-5 text-center text-[15.5px] font-bold">92</span>
      <Svg className="ml-5 h-5 w-5" sw={1.3}><rect x=".8" y="3" width="18.4" height="13.5" rx="2" /><path d="M4 6.700h.5M7 6.700h.5M10 6.700h.5M13 6.700h.5M16 6.700h.2M5 9.800h.5M8 9.800h.5M11 9.800h.5M14 9.800h.5M5.500 13h9" strokeWidth="1.5" /></Svg>
      <Svg className="ml-5 h-5 w-5" sw={1.3}><rect x="1" y="2.8" width="18" height="14.5" rx="2.5" /><path d="M1 11h18M10 11v6" /></Svg>
      <div className="ml-[17px] w-[42px] text-center text-[14.5px] leading-5 tracking-[-0.5px]">ENG<br />IN</div>
      <Svg className="ml-4 h-[21px] w-[21px]" sw={1.2}>
        <path d="M18.800 8.500A9 9 0 1 0 9 19M10 1C5 5 5 15 9 19M10 1c2.500 2.300 3.800 5 4 7.500M1.800 6.800h16M1.800 13h7" />
        <circle cx="14.7" cy="14.7" r="4.6" /><path d="m11.600 17.800 6.200-6.200" />
      </Svg>
      <Svg className="ml-[9px] h-[21px] w-[21px]" sw={1.2}><path d="M1 7.500h3.300L9 3.300v13.400l-4.700-4.200H1zM12 7.500c1 1.500 1 3.500 0 5M14.500 5.200c2.200 3 2.200 6.600 0 9.600M17 3.200c3.200 4.200 3.200 9.400 0 13.600" /></Svg>
      <Svg className="ml-[9px] h-5 w-[21px]" box="0 0 21 20" sw={1.3}><rect x=".8" y="4" width="17" height="12" rx="2.8" /><rect x="3.3" y="6.500" width="12" height="7" rx="1" fill="currentColor" /><path d="M19.800 8.500v3" strokeWidth="1.6" /></Svg>
      <div className="-mt-0.5 ml-5 w-[77px] text-right text-[14.8px] leading-5 tracking-[-0.1px] whitespace-nowrap">11:55 AM<br />09-04-2024</div>
      <svg className="ml-2.5 h-5 w-[19px]" viewBox="0 0 19 20">
        <path d="M8 1.500c3.700 0 6 2.500 6 6V12l1.700 3c.2.500 0 1-.6 1H1c-.6 0-.9-.5-.7-1L2 12V7.500c0-3.500 2.300-6 6-6zM5.500 17h5c-.3 1.400-1.300 2-2.500 2s-2.200-.6-2.500-2z" fill="#fff" />
        <path d="M5.500 7.500h3l-3 4h3M10 6.500h2.500l-2.500 3.500h2.500" stroke="#0a1730" strokeWidth="1.1" fill="none" />
        <path d="M14.500 1.500h3.500l-3.500 4.500H18" stroke="#fff" strokeWidth="1.2" fill="none" />
      </svg>
      <div className="relative ml-5 h-7 w-[30px]">
        <Copilot className="h-[27px] w-[30px]" pre />
        <span className="absolute -right-px -bottom-px flex h-[10px] w-[22px] items-center justify-center rounded-[2px] bg-[#ffc400] text-[9px] leading-none font-bold text-black">PRE</span>
      </div>
    </div>
  );
}

export default function App() {
  return (
    <div className={`flex h-[1080px] w-[1920px] flex-col overflow-hidden bg-[#3b3b3b] ${UI}`}>
      <header className="h-[130px] shrink-0">
        <TitleBar />
        <AddressRow />
        <Bookmarks />
      </header>
      <main className={`mx-[5px] flex h-[885px] shrink-0 overflow-hidden rounded-[10px] bg-white ${PAGE}`}>
        <div className="h-[885px] w-[1891px] overflow-hidden">
          <NavBar />
          <SearchPanel />
          <Summary />
          <button className="mt-[29px] ml-[151px] flex h-[47px] w-[76px] items-center justify-center rounded-[7px] bg-[#0d6efd] pb-px text-[20px] text-white">Print</button>
          <AttendanceTable />
        </div>
        <PageScrollbar />
      </main>
      <footer className="relative mt-[5px] flex h-[60px] shrink-0">
        <Wallpaper />
        <TaskIcons />
        <div className="flex-1" />
        <Tray />
      </footer>
    </div>
  );
}
